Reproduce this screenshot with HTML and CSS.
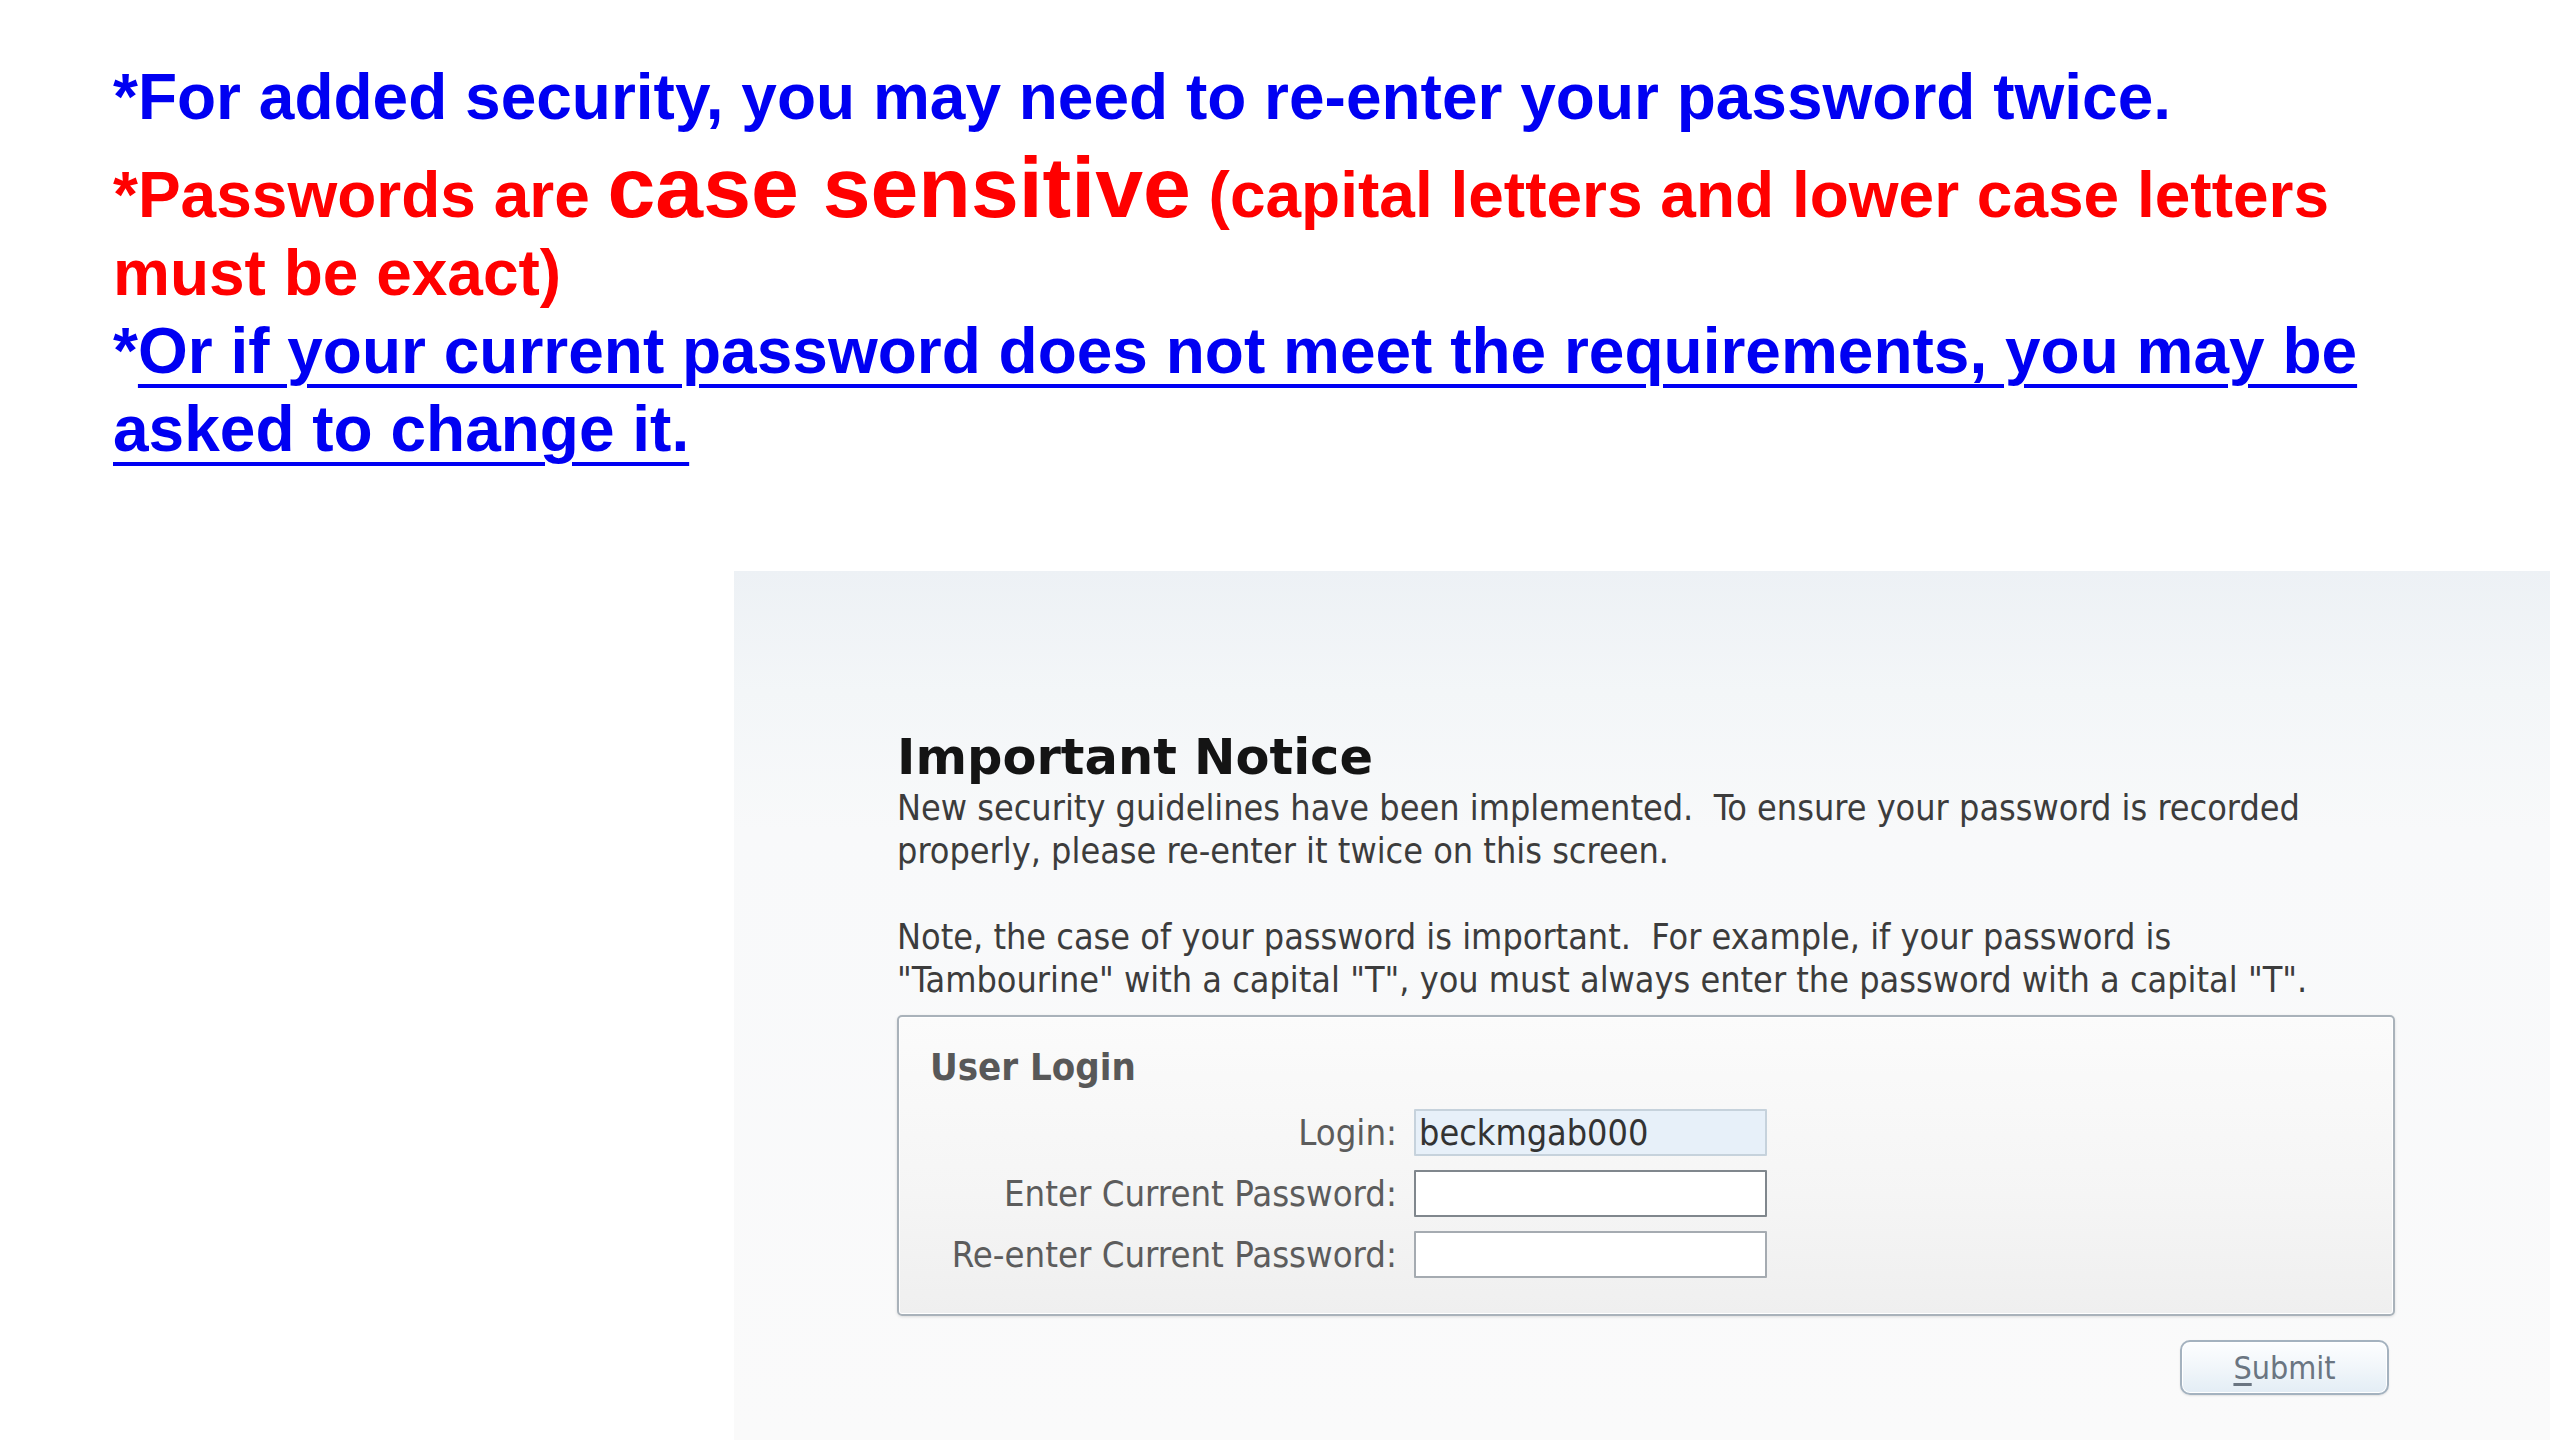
FILE: index.html
```html
<!DOCTYPE html>
<html lang="en">
<head>
<meta charset="utf-8">
<title>Password Notice</title>
<link rel="stylesheet" href="styles.css">
</head>
<body>
<div class="page">
  <div class="notes">
    <p class="note blue">*For added security, you may need to re-enter your password twice.</p>
    <p class="note red gap">*Passwords are <span class="big">case sensitive</span> (capital letters and lower case letters<br>must be exact)</p>
    <p class="note blue">*<span class="ul">Or if your current password does not meet the requirements, you may be<br>asked to change it.</span></p>
  </div>

  <div class="panel">
    <div class="content">
      <h1 class="title">Important Notice</h1>
      <p class="txt">New security guidelines have been implemented.&nbsp; To ensure your password is recorded<br>properly, please re-enter it twice on this screen.</p>
      <p class="txt">Note, the case of your password is important.&nbsp; For example, if your password is<br>"Tambourine" with a capital "T", you must always enter the password with a capital "T".</p>

      <div class="box">
        <div class="legend">User Login</div>
        <div class="rows">
          <label class="lbl" for="login">Login:</label>
          <input class="field filled" id="login" type="text" value="beckmgab000">
          <label class="lbl" for="pw1">Enter Current Password:</label>
          <input class="field dark" id="pw1" type="password">
          <label class="lbl" for="pw2">Re-enter Current Password:</label>
          <input class="field" id="pw2" type="password">
        </div>
      </div>

      <div class="actions">
        <button class="btn" type="button"><u>S</u>ubmit</button>
      </div>
    </div>
  </div>
</div>
</body>
</html>
```

FILE: styles.css
```css
html, body {
  margin: 0;
  padding: 0;
  background: #ffffff;
}

body {
  width: 2560px;
  height: 1440px;
  overflow: hidden;
}

.page {
  display: flex;
  flex-direction: column;
  width: 2560px;
  height: 1440px;
}

/* ---------- top notes ---------- */
.notes {
  padding: 58px 0 0 113px;
  width: 2317px;
}

.note {
  margin: 0;
  font-family: "Liberation Sans", Arial, sans-serif;
  font-weight: bold;
  font-size: 64px;
  line-height: 78px;
  white-space: nowrap;
}

.note.gap {
  margin-top: 20px;
}

.blue {
  color: #0000f2;
}

.red {
  color: #ff0000;
}

.big {
  font-size: 86px;
  line-height: 0;
}

.ul {
  text-decoration: underline;
  text-decoration-thickness: 4px;
  text-underline-offset: 11px;
}

/* ---------- screenshot panel ---------- */
.panel {
  margin: 103px 0 0 734px;
  width: 1816px;
  height: 869px;
  background: linear-gradient(180deg, #edf1f5 0px, #f3f6f8 120px, #f8f9fa 260px, #fafafa 100%);
}

.content {
  padding: 158px 0 0 163px;
  width: 1498px;
  display: flex;
  flex-direction: column;
}

.title {
  margin: 0;
  font-family: "DejaVu Sans", Verdana, sans-serif;
  font-weight: bold;
  font-size: 49.5px;
  line-height: 57px;
  color: #141414;
}

.txt {
  margin: 0 0 43px 0;
  font-family: "DejaVu Sans Condensed", "DejaVu Sans", sans-serif;
  font-stretch: condensed;
  font-size: 35.7px;
  line-height: 43px;
  color: #3c3c3c;
  white-space: nowrap;
}

.txt:last-of-type {
  margin-bottom: 0;
}

/* ---------- login box ---------- */
.box {
  box-sizing: border-box;
  margin-top: 14px;
  width: 1498px;
  height: 301px;
  border: 2px solid #a9b2ba;
  border-radius: 5px;
  background: linear-gradient(180deg, #fbfbfb 0%, #f5f5f5 60%, #efefef 100%);
  box-shadow: 0 1px 3px rgba(0, 0, 0, 0.12), inset 0 0 0 1px #ffffff;
  padding: 28px 0 0 31px;
}

.legend {
  font-family: "DejaVu Sans Condensed", "DejaVu Sans", sans-serif;
  font-stretch: condensed;
  font-weight: bold;
  font-size: 38px;
  line-height: 44px;
  color: #585858;
}

.rows {
  margin-top: 20px;
  display: grid;
  grid-template-columns: 467px 353px;
  grid-auto-rows: 47px;
  column-gap: 17px;
  row-gap: 14px;
  align-items: center;
}

.lbl {
  text-align: right;
  font-family: "DejaVu Sans Condensed", "DejaVu Sans", sans-serif;
  font-stretch: condensed;
  font-size: 36.2px;
  color: #5c5c5c;
}

.field {
  box-sizing: border-box;
  width: 353px;
  height: 47px;
  margin: 0;
  padding: 0 0 0 3px;
  border: 2px solid #a5abb1;
  border-radius: 1px;
  background: #ffffff;
  font-family: "DejaVu Sans Condensed", "DejaVu Sans", sans-serif;
  font-stretch: condensed;
  font-size: 35.7px;
  color: #333333;
  outline: none;
}

.field.filled {
  background: #e7f0f9;
  border-color: #c6d2dc;
}

.field.dark {
  border-color: #80878d;
}

/* ---------- submit ---------- */
.actions {
  display: flex;
  justify-content: flex-end;
  padding-right: 6px;
  margin-top: 24px;
}

.btn {
  width: 209px;
  height: 55px;
  padding: 0;
  border: 2px solid #a4b2bf;
  border-radius: 10px;
  background: linear-gradient(180deg, #fdfeff 0%, #f1f6fa 50%, #e3edf5 100%);
  box-shadow: inset 0 0 0 1px #ffffff, 0 1px 2px rgba(0, 0, 0, 0.1);
  font-family: "DejaVu Sans Condensed", "DejaVu Sans", sans-serif;
  font-stretch: condensed;
  font-size: 32px;
  color: #6a7581;
}

.btn u {
  text-decoration-thickness: 3px;
  text-underline-offset: 4px;
}
```
